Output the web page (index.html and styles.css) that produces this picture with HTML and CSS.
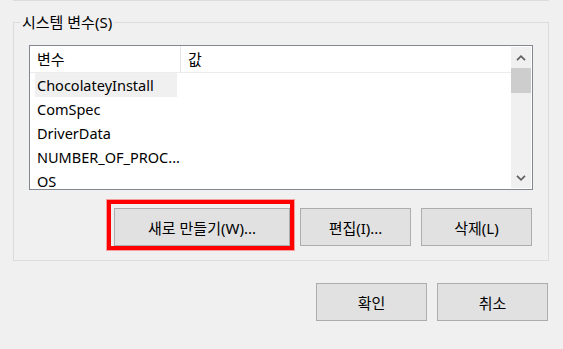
FILE: index.html
```html
<!DOCTYPE html>
<html lang="ko">
<head>
<meta charset="utf-8">
<title>시스템 변수</title>
<link rel="stylesheet" href="styles.css">
</head>
<body>
<div class="prev-group"></div>
<fieldset class="group">
  <legend class="group-title">시스템 변수(S)</legend>
  <div class="group-body">
    <div class="listbox">
      <div class="list-main">
        <div class="list-header">
          <div class="hcell hcell-name">변수</div>
          <div class="hcell hcell-value">값</div>
        </div>
        <div class="rows">
          <div class="row"><span class="cell selected">ChocolateyInstall</span></div>
          <div class="row"><span class="cell">ComSpec</span></div>
          <div class="row"><span class="cell">DriverData</span></div>
          <div class="row"><span class="cell">NUMBER_OF_PROC...</span></div>
          <div class="row"><span class="cell">OS</span></div>
        </div>
      </div>
      <div class="scrollbar">
        <div class="sb-btn"><svg width="10" height="6" viewBox="0 0 10 6"><path d="M1 5.2 L5 1.2 L9 5.2" fill="none" stroke="#606060" stroke-width="1.7"/></svg></div>
        <div class="sb-thumb"></div>
        <div class="sb-track"></div>
        <div class="sb-btn"><svg width="10" height="6" viewBox="0 0 10 6"><path d="M1 0.8 L5 4.8 L9 0.8" fill="none" stroke="#606060" stroke-width="1.7"/></svg></div>
      </div>
    </div>
    <div class="btn-row">
      <button class="btn btn-new">새로 만들기(W)...<span class="highlight-mark"></span></button>
      <button class="btn btn-small">편집(I)...</button>
      <button class="btn btn-small">삭제(L)</button>
    </div>
  </div>
</fieldset>
<div class="dialog-buttons">
  <button class="btn btn-small">확인</button>
  <button class="btn btn-small">취소</button>
</div>
</body>
</html>
```

FILE: styles.css
```css
html, body {
  margin: 0;
  padding: 0;
}
body {
  width: 563px;
  height: 349px;
  overflow: hidden;
  background: #f0f0f0;
  font-family: "Noto Sans", "Noto Sans CJK KR", sans-serif;
  font-size: 15px;
  color: #000;
}
.prev-group {
  margin: 0 14px 0 13px;
  height: 0;
  border-bottom: 1px solid #dcdcdc;
}
.group {
  margin: 11px 14px 0 13px;
  padding: 0;
  border: 1px solid #dcdcdc;
  min-inline-size: 0;
}
.group-title {
  margin-left: 6px;
  padding: 0 2px;
  height: 21px;
  line-height: 21px;
  font-size: 15px;
}
.group-body {
  padding: 12px 15px 14px 15px;
}
.listbox {
  display: flex;
  height: 143px;
  border: 1px solid #828790;
  background: #fff;
}
.list-main {
  flex: 1;
  overflow: hidden;
}
.list-header {
  display: flex;
  height: 26px;
  border-bottom: 1px solid #ececec;
}
.hcell {
  line-height: 26px;
  padding-left: 7px;
}
.hcell-name {
  width: 143px;
  border-right: 1px solid #e5e5e5;
}
.rows {
  padding-left: 5px;
}
.row {
  height: 24px;
}
.cell {
  display: block;
  width: 140px;
  height: 24px;
  line-height: 24px;
  padding-left: 2px;
  font-size: 14.5px;
  white-space: nowrap;
  overflow: visible;
}
.cell.selected {
  background: #f0f0f0;
}
.scrollbar {
  width: 20px;
  margin: 1px 1px 1px 0;
  background: #f0f0f0;
  display: flex;
  flex-direction: column;
}
.sb-btn {
  height: 21px;
  display: flex;
  align-items: center;
  justify-content: center;
}
.sb-thumb {
  height: 25px;
  background: #cdcdcd;
}
.sb-track {
  flex: 1;
}
.btn-row {
  display: flex;
  justify-content: flex-end;
  gap: 10px;
  margin-top: 18px;
  margin-right: 1px;
}
.btn {
  height: 38px;
  background: #e1e1e1;
  border: 1px solid #adadad;
  border-radius: 0;
  padding: 0;
  font-family: "Noto Sans", "Noto Sans CJK KR", sans-serif;
  font-size: 15px;
  color: #000;
}
.btn-small {
  width: 111px;
}
.btn-new {
  width: 176px;
  position: relative;
}
.highlight-mark {
  position: absolute;
  left: -8px;
  top: -9px;
  right: -5px;
  bottom: -5px;
  border: 4px solid #ff0000;
  box-shadow: 0 0 0 1px rgba(255, 0, 0, 0.35);
  pointer-events: none;
}
.dialog-buttons {
  display: flex;
  justify-content: flex-end;
  gap: 10px;
  margin: 22px 15px 0 0;
}
```
